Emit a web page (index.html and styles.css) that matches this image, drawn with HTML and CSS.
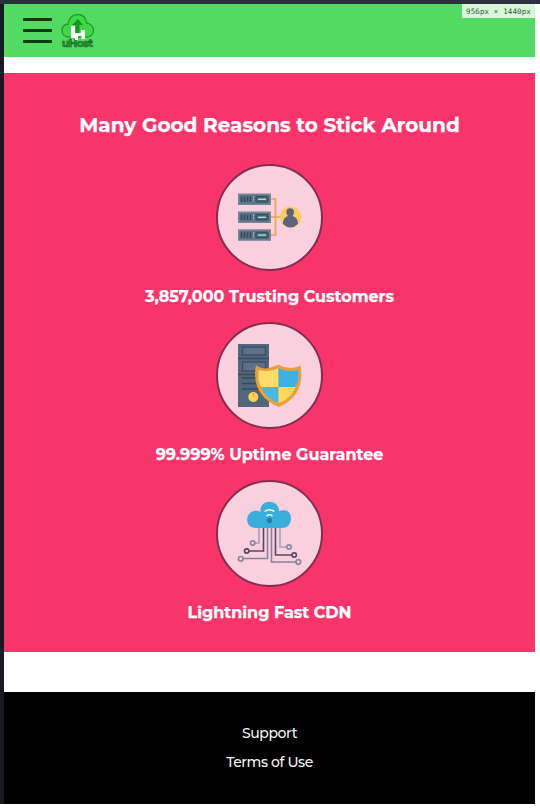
FILE: index.html
```html
<!DOCTYPE html>
<html lang="en">
<head>
<meta charset="utf-8">
<title>uHost</title>
<link rel="stylesheet" href="styles.css">
</head>
<body>
<div class="frame">
  <div class="page">
    <header class="header">
      <button class="menu" aria-label="Menu"><span class="bar"></span><span class="bar"></span><span class="bar"></span></button>
      <svg class="logo" viewBox="0 0 34 37">
        <path d="M8 24C3 24 1 21 1 17.500C1 14 3.500 11.500 7 11C8 5 11 1.500 16.500 1.500S25 5 25.500 10C30 10.500 32.500 14 32.500 17.500S30 24 26 24Z" fill="#40d748" stroke="#239c2c" stroke-width="1.300"/>
        <path d="M14.500 21V12H11L17 6L22 12H18.500V21Z" fill="#16961c"/>
        <text x="16.500" y="33.500" text-anchor="middle" textLength="31.500" class="logo-text">uHost</text>
        <path d="M10 13H14V20H20V17H24V26H20.500V23H17V27H14V25H10Z" fill="#fff"/>
      </svg>
      <span class="dimensions">956px × 1440px</span>
    </header>
    <main class="features">
      <h1 class="title">Many Good Reasons to Stick Around</h1>
      <section class="feature">
        <div class="disc">
          <svg viewBox="0 0 120 120">
            <path d="M60 41H65.500V77H60M60 59H73" fill="none" stroke="#f2a04c" stroke-width="1.700"/>
            <g id="rack">
              <rect x="28" y="35.500" width="33" height="11.500" fill="#758697"/>
              <rect x="29.500" y="37" width="30" height="8.500" fill="#5d7186"/>
              <path d="M31.500 38.500V44M34.500 38.500V44M37.500 38.500V44M40.500 38.500V44" stroke="#344b61" stroke-width="1.600"/>
              <path d="M43.500 38.500V44" stroke="#b2c5cd" stroke-dasharray="1.500 1"/>
              <rect x="46" y="38.500" width="12" height="5.500" rx="1" fill="#446a70" stroke="#344b61"/>
              <path d="M48 41.300H56" stroke="#b7d9cf" stroke-width="1.400"/>
            </g>
            <use href="#rack" y="18"/><use href="#rack" y="35.800"/>
            <circle cx="80.500" cy="59.200" r="10.700" fill="#fbce58"/>
            <path d="M73 66C73 61 75 59 78 58Q76 56 76.300 53.500A3.900 3.900 0 0 1 84 53.500Q84.300 56 82.500 58C86 59 88 61.500 88 66Q80.500 73 73 66Z" fill="#5c6480"/>
          </svg>
        </div>
        <h2 class="caption">3,857,000 Trusting Customers</h2>
      </section>
      <section class="feature">
        <div class="disc">
          <svg viewBox="0 0 120 120">
            <rect x="28" y="28" width="31" height="63" fill="#53677c"/>
            <path d="M28 42.500H59M28 58.500H59" stroke="#36475f" stroke-width="1.300"/>
            <rect x="32.500" y="31" width="23" height="8" fill="#5d7087" stroke="#364c66" stroke-width="1.300"/>
            <rect x="32.500" y="46" width="23" height="9" fill="#5d7087" stroke="#364c66" stroke-width="1.300"/>
            <path d="M32 62H56M32 67.500H56M32 73H56" stroke="#364861" stroke-width="1.500"/>
            <circle cx="43.300" cy="81" r="5" fill="#ffd25a"/><path d="M43.500 77V81" stroke="#e9a63f" stroke-width="1.500"/>
            <path d="M46 49.500Q53 54 60.500 51.500Q65 50.500 68.500 48.500Q72 51 77 51.500Q84 53 90.500 49.500C94 69 87 83 69 91C51 84 42 69 46 49.500Z" fill="#eb9f3b"/>
            <path d="M49 54Q59 57 68.500 52V71H51Q47 63 49 54Z" fill="#ffdc68"/>
            <path d="M68.500 52Q78 57 88 54Q90 63 85.500 71H68.500Z" fill="#3bb1e5"/>
            <path d="M51 71H68.500V87Q55 82 51 71Z" fill="#45b9df"/>
            <path d="M68.500 71H85.500Q81 83 68.500 87Z" fill="#ffd75c"/>
          </svg>
        </div>
        <h2 class="caption">99.999% Uptime Guarantee</h2>
      </section>
      <section class="feature">
        <div class="disc">
          <svg viewBox="0 0 120 120">
            <g fill="none" stroke-width="1.600">
              <path d="M49 52V69H45M70 52V73H77" stroke="#a4a0ba"/>
              <path d="M53.500 52V77H39M65.500 52V81H82" stroke="#514967"/>
              <path d="M57.500 52V84.500H33M61.500 52V88H86" stroke="#85839c"/>
              <g stroke="#8b88a0" stroke-width="1.700"><circle cx="42.700" cy="69" r="2.200"/><circle cx="79" cy="73" r="2.200"/><circle cx="30.800" cy="84.800" r="2.300"/><circle cx="88.300" cy="88" r="2.300"/></g>
              <g stroke="#514967" stroke-width="1.700"><circle cx="36.700" cy="77" r="2.200"/><circle cx="84.200" cy="81" r="2.200"/></g>
            </g>
            <path d="M46 54C34 54 34 37 47 36.500Q49.500 37 50.500 38C49 24.500 69 24.500 69 37Q81 34 81 45Q80 54 72 54Z" fill="#39aeda"/>
            <path d="M54.500 37.500Q59.500 34 64.500 37.500M56.500 41.800Q59.500 39.800 62.500 41.800" fill="none" stroke="#eaffff" stroke-width="1.500"/>
            <circle cx="59.500" cy="46.500" r="2.700" fill="#227eaf"/>
          </svg>
        </div>
        <h2 class="caption">Lightning Fast CDN</h2>
      </section>
    </main>
    <footer class="footer">
      <a>Support</a>
      <a>Terms of Use</a>
    </footer>
  </div>
</div>
</body>
</html>
```
FILE: styles.css
```css
* { box-sizing: border-box; }
body { margin: 0; background: #fff; font-family: "Montserrat", "Inter", sans-serif; }
.frame { height: 804px; padding-top: 4px; background: linear-gradient(#2b3040 0 4px, transparent 4px), linear-gradient(90deg, #171a20 0 4px, #fff 4px); }
.page { width: 531px; height: 800px; margin-left: 4px; display: flex; flex-direction: column; }
.header { height: 53px; flex: none; position: relative; display: flex; align-items: center; padding-left: 19px; background: #53da62; }
.menu { width: 29px; height: 25px; border: 0; padding: 0; display: flex; flex-direction: column; justify-content: space-between; background: transparent; }
.bar { height: 3px; border-radius: 1px; background: #0d3a12; }
.logo { width: 34px; height: 37px; margin-left: 9px; margin-top: 2px; }
.logo-text { font: 800 11px "Montserrat", "Inter", sans-serif; fill: #288e30; stroke: #16651c; stroke-width: .4px; }
.dimensions { position: absolute; right: 0; top: 0; width: 73px; height: 14px; background: #d6f8d6; color: #415146; font: 7.500px/15px "DejaVu Sans Mono", monospace; text-align: center; white-space: nowrap; letter-spacing: .12px; }
.features { height: 579px; flex: none; margin-top: 16px; padding-top: 38px; background: #f7356b; color: #fff; }
.title { margin: 0 0 25px; font-size: 20px; line-height: 28px; text-align: center; white-space: nowrap; -webkit-text-stroke: .25px #fff; }
.feature { height: 158px; display: flex; flex-direction: column; align-items: center; }
.disc { width: 107px; height: 107px; flex: none; border: 2px solid #832d50; border-radius: 50%; background: #fad0df; display: flex; align-items: center; justify-content: center; }
.disc svg { width: 120px; height: 120px; flex: none; }
.caption { margin: 15px 0 0; font-size: 16px; line-height: 22px; white-space: nowrap; -webkit-text-stroke: .25px #fff; }
.footer { height: 112px; flex: none; margin-top: 40px; padding-top: 31px; display: flex; flex-direction: column; align-items: center; gap: 9px; background: #000; color: #f4f4f4; font-size: 14px; line-height: 20px; letter-spacing: -.4px; font-weight: 500; }
```
